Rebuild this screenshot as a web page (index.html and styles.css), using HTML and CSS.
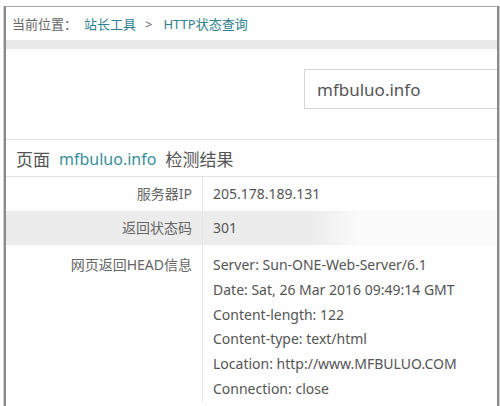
FILE: index.html
```html
<!DOCTYPE html>
<html lang="zh-CN">
<head>
<meta charset="utf-8">
<title>HTTP状态查询</title>
<link rel="stylesheet" href="styles.css">
</head>
<body>
<div class="frame">
  <div class="crumb">
    <span class="muted">当前位置：</span>
    <span class="link">站长工具</span>
    <span class="sep">&gt;</span>
    <span class="link">HTTP状态查询</span>
  </div>
  <div class="band"></div>
  <div class="search">
    <div class="input">mfbuluo.info</div>
  </div>
  <div class="title">
    <span class="cjk">页面</span>
    <span class="link">mfbuluo.info</span>
    <span class="cjk">检测结果</span>
  </div>
  <div class="table">
    <div class="row">
      <div class="label">服务器IP</div>
      <div class="value">205.178.189.131</div>
    </div>
    <div class="row alt">
      <div class="label">返回状态码</div>
      <div class="value">301</div>
    </div>
    <div class="row multi">
      <div class="label">网页返回HEAD信息</div>
      <div class="value">
        <div>Server: Sun-ONE-Web-Server/6.1</div>
        <div>Date: Sat, 26 Mar 2016 09:49:14 GMT</div>
        <div>Content-length: 122</div>
        <div>Content-type: text/html</div>
        <div>Location: http://www.MFBULUO.COM</div>
        <div>Connection: close</div>
      </div>
    </div>
  </div>
</div>
</body>
</html>
```
FILE: styles.css
```css
html, body {
  margin: 0;
  padding: 0;
  background: #fdfdfd;
}
body {
  font-family: "Noto Sans", "Noto Sans CJK SC", sans-serif;
  color: #555;
  height: 406px;
  overflow: hidden;
}
.frame {
  margin: 6px 1px 0 4px;
  border-left: 2px solid #8a8a8a;
  border-right: 2px solid #8a8a8a;
  border-top: 1px solid #a8a8a8;
  background: #fefefe;
  height: 399px;
  overflow: hidden;
  box-shadow: -1px 0 0 #d0d0d0, 1px 0 0 #d0d0d0;
}
.crumb {
  height: 33px;
  display: flex;
  align-items: center;
  gap: 9px;
  padding-left: 6px;
  font-size: 13px;
}
.crumb .muted { color: #666; margin-right: -2px; }
.crumb .sep { color: #666; margin: 0 2px 0 0; }
.link { color: #2f8190; }
.band {
  height: 9px;
  background: #e8e8e8;
}
.search {
  height: 91px;
  display: flex;
  justify-content: flex-end;
  align-items: flex-start;
  padding-top: 20px;
  box-sizing: border-box;
  border-bottom: 1px solid #e3e3e3;
}
.input {
  width: 180px;
  height: 38px;
  border: 1px solid #d6d6d6;
  border-right: none;
  display: flex;
  align-items: center;
  padding-left: 12px;
  font-size: 17px;
  color: #555;
  background: #fff;
}
.title {
  height: 36px;
  display: flex;
  align-items: center;
  gap: 9px;
  padding-left: 10px;
  font-size: 16px;
  color: #555;
  border-bottom: 1px solid #e3e3e3;
}
.title .cjk { font-size: 17px; }
.title .link { color: #3a8e9a; margin-top: 1px; }
.row {
  display: flex;
  font-size: 14px;
}
.row .label {
  width: 197px;
  flex: none;
  text-align: right;
  padding: 0 10px 0 0;
  box-sizing: border-box;
  border-right: 1px solid #e6e6e6;
  line-height: 34px;
  color: #666;
}
.row .value {
  padding-left: 10px;
  line-height: 34px;
  color: #555;
}
.row.alt {
  background: linear-gradient(to right, #ececec 0%, #ececec 62%, #fbfbfb 72%, #fbfbfb 100%);
}
.row.multi .label,
.row.multi .value {
  line-height: 24.8px;
  padding-top: 8px;
}
```
